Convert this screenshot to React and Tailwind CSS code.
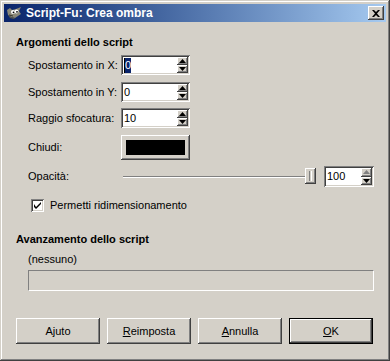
import React from "react";

const raised =
  "shadow-[inset_-1px_-1px_#404040,inset_1px_1px_#ffffff,inset_-2px_-2px_#808080,inset_2px_2px_#d4d0c8]";
const sunken =
  "shadow-[inset_1px_1px_#808080,inset_-1px_-1px_#ffffff,inset_2px_2px_#404040,inset_-2px_-2px_#d4d0c8]";

function Tri({ up, grey }) {
  return (
    <svg width="7" height="4" viewBox="0 0 7 4">
      <polygon
        points={up ? "3.5,0 7,4 0,4" : "0,0 7,0 3.5,4"}
        fill={grey ? "#808080" : "#000000"}
      />
    </svg>
  );
}

function SpinArrows({ greyUp }) {
  return (
    <div className="flex flex-col w-[11px] h-full">
      <div className={`flex-1 bg-[#d4d0c8] flex items-center justify-center ${raised}`}>
        <Tri up grey={greyUp} />
      </div>
      <div className={`flex-1 bg-[#d4d0c8] flex items-center justify-center ${raised}`}>
        <Tri />
      </div>
    </div>
  );
}

function Spin({ value, selected, w = "w-[69px]", h = "h-[20px]", greyUp }) {
  return (
    <div className={`${w} ${h} bg-white ${sunken} p-[2px] flex`}>
      <div className="flex-1 flex items-center pl-[1px]">
        {selected ? (
          <span className="bg-[#0a246a] text-white leading-[15px] px-[0px] border-l border-black">{value}</span>
        ) : (
          <span>{value}</span>
        )}
      </div>
      <SpinArrows greyUp={greyUp} />
    </div>
  );
}

function Row({ label, children }) {
  return (
    <div className="flex items-center pl-[12px]">
      <div className="w-[93px]">{label}</div>
      {children}
    </div>
  );
}

function Btn({ children, def }) {
  if (def) {
    return (
      <div className="w-[84px] h-[26px] border border-black">
        <div className={`w-full h-full bg-[#d4d0c8] ${raised} flex items-center justify-center`}>
          {children}
        </div>
      </div>
    );
  }
  return (
    <div className={`w-[84px] h-[26px] bg-[#d4d0c8] ${raised} flex items-center justify-center`}>
      {children}
    </div>
  );
}

export default function App() {
  return (
    <div
      className="w-[390px] h-[361px] bg-[#d4d0c8] p-[4px] text-[11px] text-black shadow-[inset_-1px_-1px_#404040,inset_1px_1px_#d4d0c8,inset_-2px_-2px_#808080,inset_2px_2px_#ffffff] flex flex-col"
      style={{ fontFamily: '"Liberation Sans", Arial, sans-serif' }}
    >
      {/* Title bar */}
      <div className="h-[18px] bg-linear-to-r from-[#0a246a] to-[#a6caf0] flex items-center pl-[2px] pr-[2px]">
        <svg width="16" height="16" viewBox="0 0 16 16" className="mr-[4px]">
          <path d="M1 5 L4 3 L6 5 L10 4 L15 2 L13 6 L15 9 L12 11 L9 13 L5 12 L2 10 Z" fill="#8a8878" />
          <path d="M2 10 L5 12 L9 13 L8 14 L4 13 Z" fill="#5a5848" />
          <circle cx="7" cy="7" r="2" fill="#ffffff" />
          <circle cx="10.5" cy="6.5" r="2" fill="#ffffff" />
          <circle cx="7.5" cy="7.3" r="0.9" fill="#000" />
          <circle cx="11" cy="6.8" r="0.9" fill="#000" />
          <path d="M3 10 L7 11" stroke="#3a3830" strokeWidth="1" />
        </svg>
        <span className="text-white font-bold text-[12px] leading-[18px]">Script-Fu: Crea ombra</span>
        <div className="flex-1" />
        <div className={`w-[16px] h-[14px] bg-[#d4d0c8] ${raised} flex items-center justify-center`}>
          <svg width="8" height="7" viewBox="0 0 8 7">
            <path d="M0 0 L2 0 L4 2 L6 0 L8 0 L5 3.5 L8 7 L6 7 L4 5 L2 7 L0 7 L3 3.5 Z" fill="#000" />
          </svg>
        </div>
      </div>

      <div className="px-[12px] flex flex-col">
        <div className="mt-[13px] h-[14px] leading-[14px] font-bold">Argomenti dello script</div>

        <div className="mt-[6px]">
          <Row label="Spostamento in X:">
            <Spin value="0" selected />
          </Row>
        </div>
        <div className="mt-[7px]">
          <Row label="Spostamento in Y:">
            <Spin value="0" />
          </Row>
        </div>
        <div className="mt-[6px]">
          <Row label="Raggio sfocatura:">
            <Spin value="10" />
          </Row>
        </div>
        <div className="mt-[7px]">
          <Row label="Chiudi:">
            <div className={`w-[69px] h-[25px] bg-[#d4d0c8] ${raised} p-[5px]`}>
              <div className="w-full h-full bg-black" />
            </div>
          </Row>
        </div>
        <div className="mt-[6px] flex items-center pl-[12px] h-[21px]">
          <div className="w-[95px]">Opacità:</div>
          <div className="w-[193px] h-[21px] relative flex items-center">
            <div className="w-[187px] h-[2px] border-t border-[#808080] border-b border-b-white" />
            <div
              className={`absolute left-[182px] top-[2px] w-[11px] h-[16px] bg-[#d4d0c8] ${raised} flex justify-center pt-[3px]`}
            >
              <div className="w-[3px] h-[10px] border-l border-[#808080] border-r border-r-white" />
            </div>
          </div>
          <div className="ml-[8px]">
            <Spin value="100" w="w-[50px]" h="h-[21px]" greyUp />
          </div>
        </div>

        <div className="mt-[12px] h-[13px] flex items-center pl-[15px]">
          <div className={`w-[13px] h-[13px] bg-white ${sunken} flex items-center justify-center`}>
            <svg width="7" height="7" viewBox="0 0 7 7">
              <path d="M0 2 L0 5 L2 7 L7 2 L7 0 L2 5 Z" fill="#000" />
            </svg>
          </div>
          <span className="ml-[6px]">Permetti ridimensionamento</span>
        </div>

        <div className="mt-[20px] h-[14px] leading-[14px] font-bold">Avanzamento dello script</div>
        <div className="mt-[6px] h-[14px] leading-[14px] pl-[12px]">(nessuno)</div>
        <div className="mt-[4px] ml-[12px] w-[346px] h-[21px] border border-[#808080] border-r-white border-b-white" />

        <div className="mt-[27px] flex gap-[7px]">
          <Btn>Ajuto</Btn>
          <Btn>
            <span><span className="underline">R</span>eimposta</span>
          </Btn>
          <Btn>
            <span><span className="underline">A</span>nnulla</span>
          </Btn>
          <Btn def>
            <span><span className="underline">O</span>K</span>
          </Btn>
        </div>
      </div>
    </div>
  );
}
